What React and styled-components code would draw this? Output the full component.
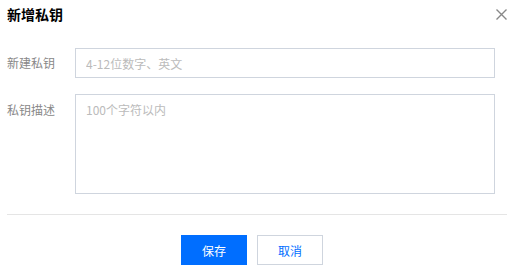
import React from "react";
import styled, { createGlobalStyle } from "styled-components";

const Global = createGlobalStyle`
  html, body { margin: 0; padding: 0; background: #fff; }
  body { font-family: "Noto Sans CJK SC", "Noto Sans", sans-serif; font-size: 12px; color: #000; }
  * { box-sizing: border-box; }
`;

const Dialog = styled.div`
  width: 514px;
  height: 275px;
  padding: 0 7px;
  background: #fff;
`;

const Header = styled.div`
  height: 28px;
  display: flex;
  align-items: center;
  justify-content: space-between;
`;

const Title = styled.h2`
  margin: 0;
  font-size: 14px;
  font-weight: 700;
  line-height: 20px;
  color: #000;
`;

const Close = styled.button`
  width: 11px;
  height: 11px;
  padding: 0;
  border: 0;
  background: none;
  display: flex;
  cursor: pointer;
`;

const Form = styled.div`
  margin-top: 20px;
  padding-right: 12px;
  display: flex;
  flex-direction: column;
  gap: 16px;
`;

const Row = styled.div`
  display: flex;
  align-items: ${(p) => (p.$top ? "flex-start" : "center")};
`;

const Label = styled.label`
  width: 68px;
  flex-shrink: 0;
  font-size: 12px;
  line-height: 18px;
  color: #888;
  padding-top: ${(p) => (p.$top ? "7px" : "0")};
`;

const fieldBase = `
  flex: 1;
  border: 1px solid #cfd5de;
  border-radius: 0;
  background: #fff;
  font-family: "Noto Sans CJK SC", "Noto Sans", sans-serif;
  font-size: 12px;
  color: #000;
  outline: none;
  padding: 0 10px;
  &::placeholder { color: #bbb; }
`;

const Input = styled.input`
  ${fieldBase}
  height: 30px;
  line-height: 28px;
`;

const TextArea = styled.textarea`
  ${fieldBase}
  height: 100px;
  line-height: 18px;
  padding: 6px 10px;
  resize: none;
`;

const Divider = styled.hr`
  margin: 20px 0 0;
  border: 0;
  border-top: 1px solid #e5e5e5;
  height: 0;
`;

const Footer = styled.div`
  margin-top: 20px;
  display: flex;
  justify-content: center;
`;

const Button = styled.button`
  width: 66px;
  height: 30px;
  margin-right: 10px;
  font-family: "Noto Sans CJK SC", "Noto Sans", sans-serif;
  font-size: 12px;
  border: 1px solid ${(p) => (p.$primary ? "#006eff" : "#cfd5de")};
  background: ${(p) => (p.$primary ? "#006eff" : "#fff")};
  color: ${(p) => (p.$primary ? "#fff" : "#006eff")};
  border-radius: 0;
  padding: 0;
  cursor: pointer;
`;

export default function App() {
  return (
    <>
      <Global />
      <Dialog>
        <Header>
          <Title>新增私钥</Title>
          <Close aria-label="close">
            <svg width="11" height="11" viewBox="0 0 11 11">
              <path d="M0.5 0.5 L10.5 10.5 M10.5 0.5 L0.5 10.5" stroke="#888" strokeWidth="1.4" fill="none" />
            </svg>
          </Close>
        </Header>
        <Form>
          <Row>
            <Label>新建私钥</Label>
            <Input placeholder="4-12位数字、英文" />
          </Row>
          <Row $top>
            <Label $top>私钥描述</Label>
            <TextArea placeholder="100个字符以内" />
          </Row>
        </Form>
        <Divider />
        <Footer>
          <Button $primary>保存</Button>
          <Button>取消</Button>
        </Footer>
      </Dialog>
    </>
  );
}
